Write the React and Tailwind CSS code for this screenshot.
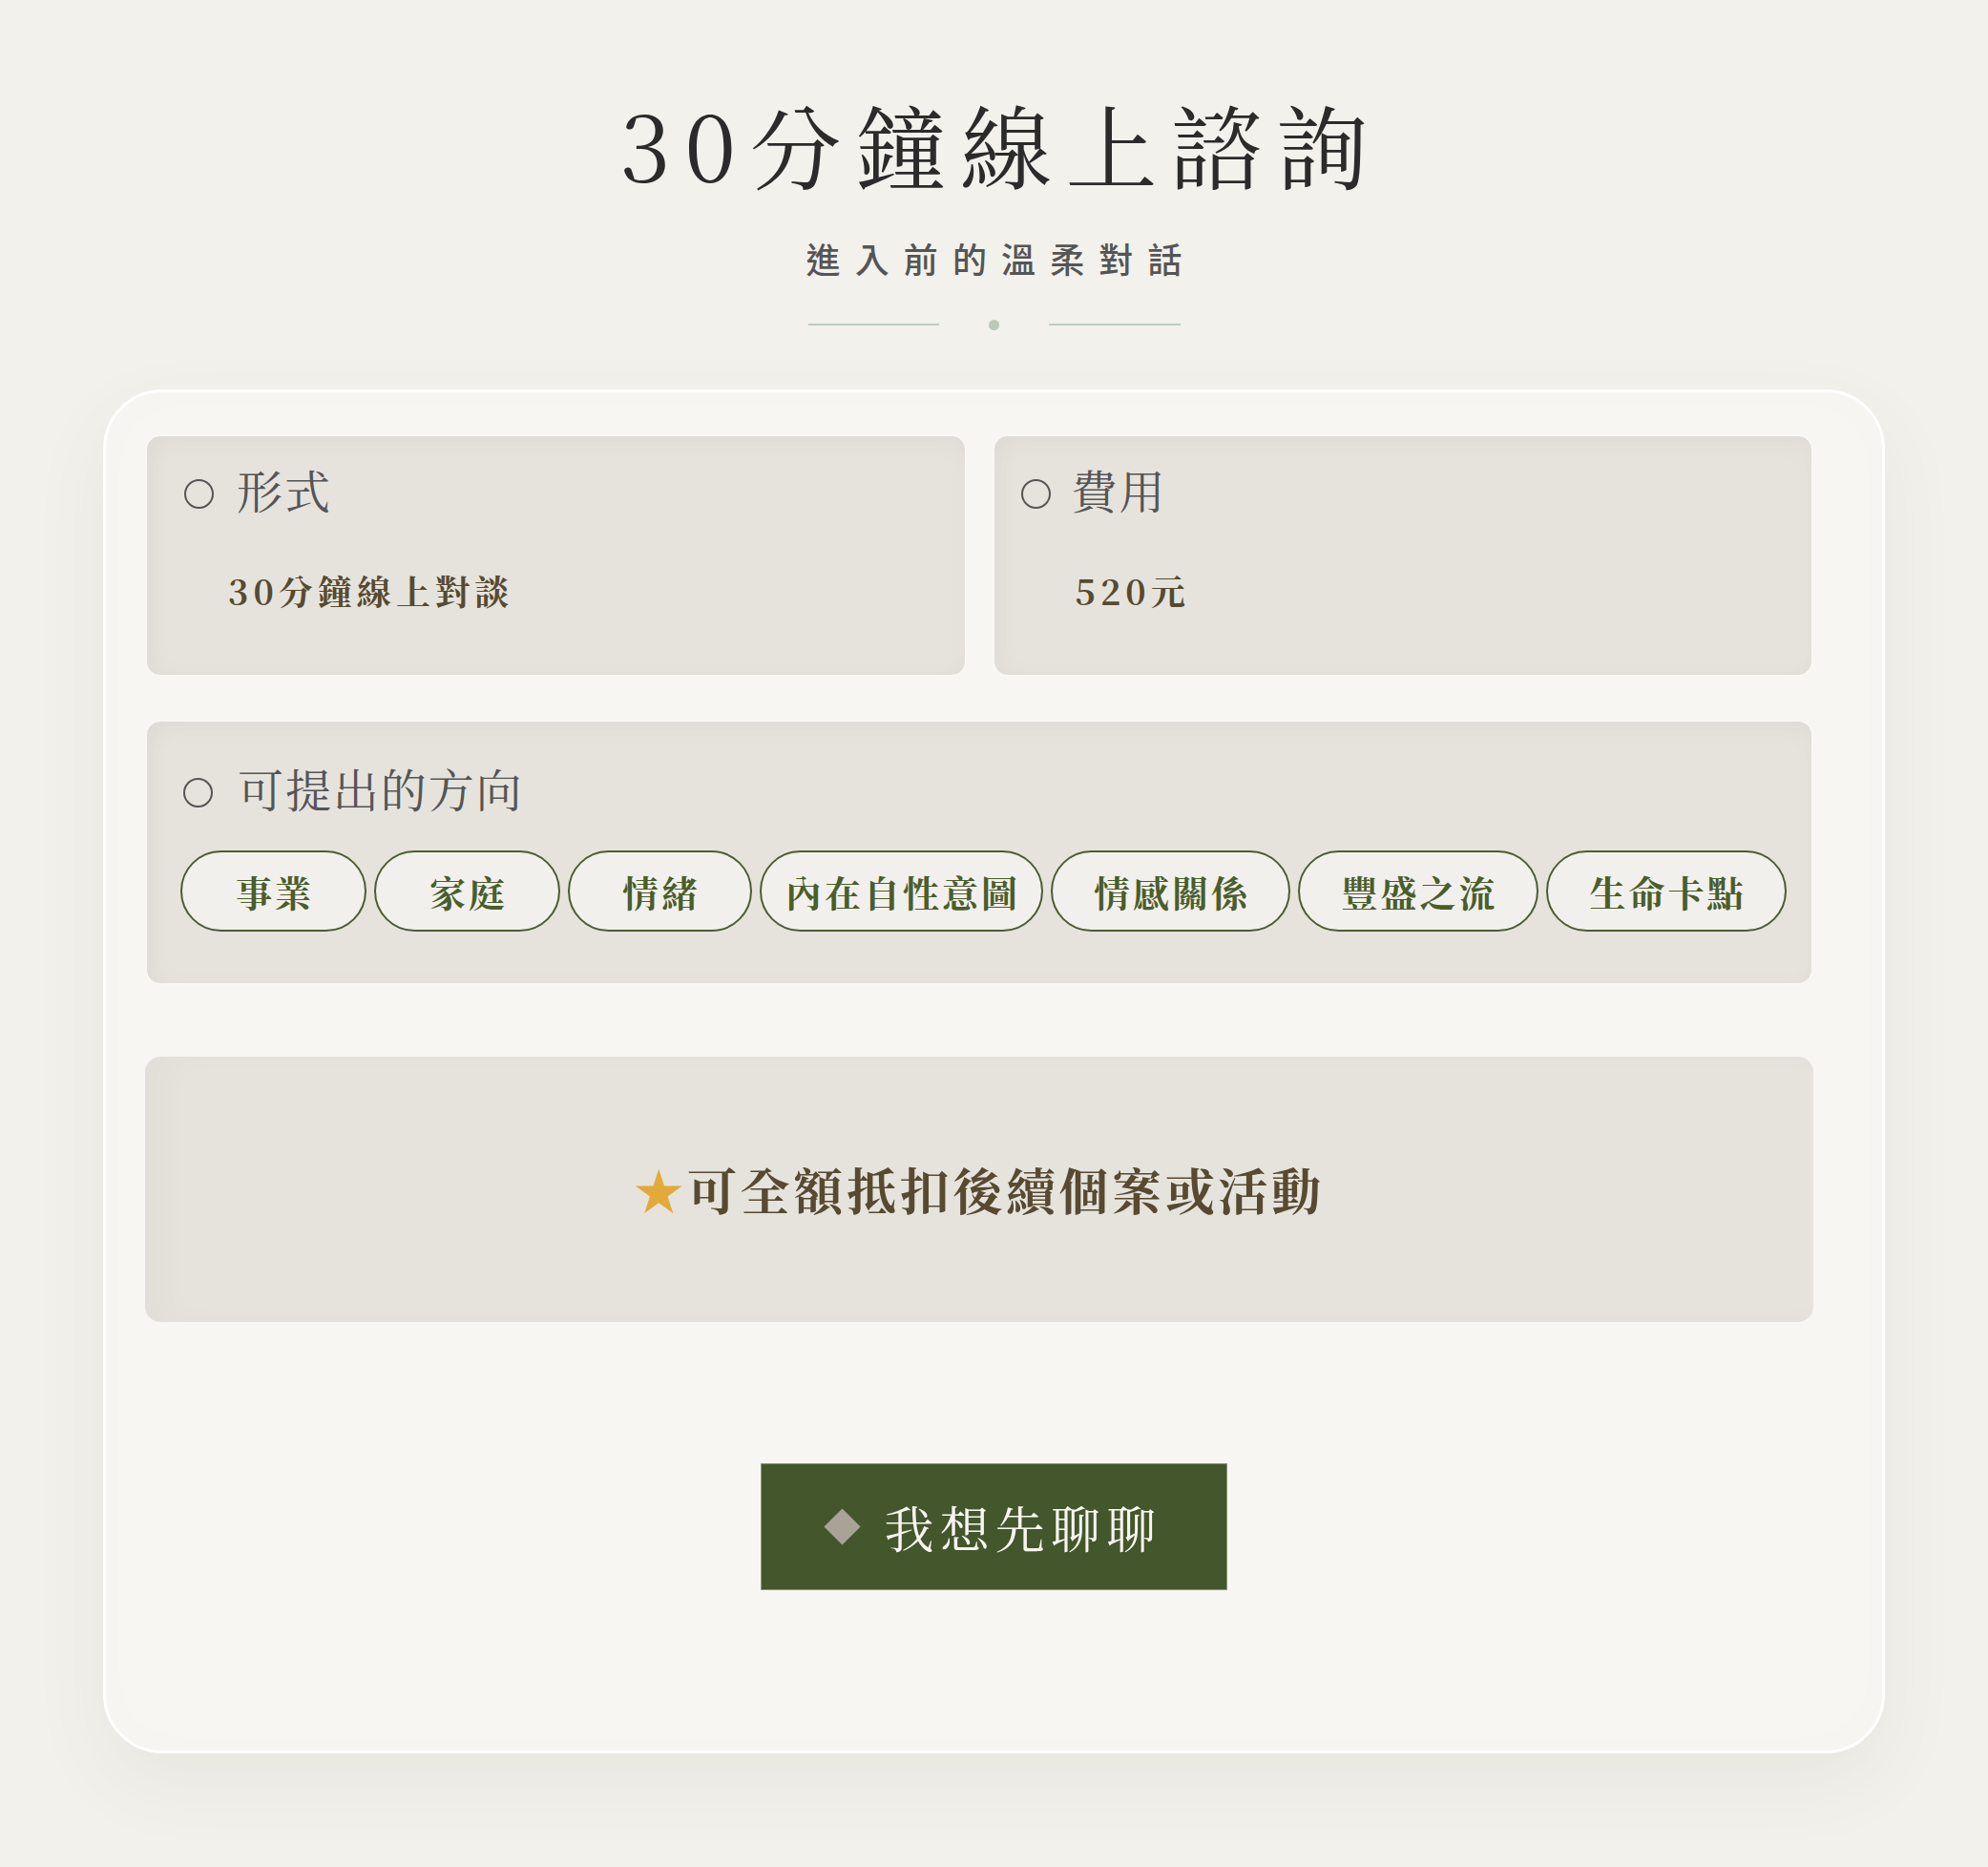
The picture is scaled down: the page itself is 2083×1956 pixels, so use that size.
const TAGS = [
  { label: "事業", w: "w-[195px]" },
  { label: "家庭", w: "w-[195px]" },
  { label: "情緒", w: "w-[193px]" },
  { label: "內在自性意圖", w: "w-[297px]" },
  { label: "情感關係", w: "w-[251px]" },
  { label: "豐盛之流", w: "w-[252px]" },
  { label: "生命卡點", w: "w-[252px]" },
];

const serif = "font-[family-name:'Noto_Serif_CJK_TC','Noto_Serif_TC','AR_PL_UMing_TW',serif]";
const sans = "font-[family-name:'Noto_Sans_CJK_TC','Noto_Sans',sans-serif]";

function Ring() {
  return <span className="inline-block w-[31px] h-[31px] rounded-full border-2 border-[#555] flex-shrink-0 mt-[8px]" />;
}

function InfoBox({ title, value, titlePad, gap }) {
  return (
    <div className="h-[254px] rounded-2xl border-2 border-[#f9f8f5] bg-[#e6e3dd] shadow-[inset_0_10px_24px_rgba(0,0,0,0.025),inset_10px_0_24px_rgba(0,0,0,0.02)]">
      <div className={`flex items-center pt-[28px] ${titlePad} ${gap}`}>
        <Ring />
        <span className={`${serif} text-[48px] leading-[56px] tracking-[0.04em] text-[#555]`}>{title}</span>
      </div>
      <p className={`${serif} pl-[85px] mt-[54px] text-[36px] leading-[48px] font-bold tracking-[0.14em] text-[#574a31]`}>{value}</p>
    </div>
  );
}

export default function App() {
  return (
    <div className="min-h-[1956px] bg-[#f2f1ec] pb-[120px]">
      {/* Header */}
      <div className="flex flex-col items-center pt-[92px]">
        <h1 className={`${serif} text-[96px] leading-[115px] font-normal tracking-[0.15em] pl-[0.15em] text-[#2b2b2b]`}>30分鐘線上諮詢</h1>
        <p className={`${sans} mt-[39px] text-[36px] leading-[48px] font-medium tracking-[0.42em] pl-[0.42em] text-[#555]`}>進入前的溫柔對話</p>
        <div className="flex items-center mt-[41px] h-[10px]">
          <div className="w-[137px] h-[2px] bg-[#c0ccbc]" />
          <div className="w-[11px] h-[11px] rounded-full bg-[#bcc8b8] mx-[52px]" />
          <div className="w-[138px] h-[2px] bg-[#c0ccbc]" />
        </div>
      </div>

      {/* Card */}
      <div className="mx-[108px] mt-[63px] rounded-[62px] border-[3px] border-white bg-[#f7f6f3] shadow-[0_30px_80px_rgba(90,80,60,0.07),inset_0_0_60px_rgba(0,0,0,0.012)] pt-[44px] pb-[168px]">
        <div className="pl-[41px] pr-[72px]">
          <div className="grid grid-cols-2 gap-[27px]">
            <InfoBox title="形式" value="30分鐘線上對談" titlePad="pl-[39px]" gap="gap-[24px]" />
            <InfoBox title="費用" value="520元" titlePad="pl-[28px]" gap="gap-[22px]" />
          </div>

          <div className="mt-[45px] h-[278px] rounded-2xl border-2 border-[#f9f8f5] bg-[#e6e3dd] shadow-[inset_0_10px_24px_rgba(0,0,0,0.025),inset_10px_0_24px_rgba(0,0,0,0.02)]">
            <div className="flex items-center gap-[26px] pt-[42px] pl-[38px]">
              <Ring />
              <span className={`${serif} text-[48px] leading-[56px] tracking-[0.04em] text-[#555]`}>可提出的方向</span>
            </div>
            <div className="flex gap-[8px] mt-[37px] pl-[35px]">
              {TAGS.map((t) => (
                <span
                  key={t.label}
                  className={`${t.w} ${serif} h-[85px] flex items-center justify-center rounded-full border-2 border-[#4b5d33] bg-[#f2f0ec] text-[38px] font-bold tracking-[0.08em] pl-[0.08em] text-[#4a5d2c]`}
                >
                  {t.label}
                </span>
              ))}
            </div>
          </div>

          <div className="mt-[75px] h-[278px] rounded-2xl bg-[#e6e3dd] shadow-[inset_24px_0_30px_rgba(0,0,0,0.02)] flex items-center justify-center">
            <p className={`${serif} text-[52px] font-bold tracking-[0.07em] text-[#574a31]`}>
              <span className="text-[#e2a93b]">★</span>可全額抵扣後續個案或活動
            </p>
          </div>
        </div>

        {/* CTA */}
        <div className="flex justify-center mt-[148px]">
          <button className="w-[489px] h-[133px] bg-[#43562c] border border-[#8a9a78] flex items-center justify-center gap-[30px] pl-[4px]">
            <span className="w-[27px] h-[27px] rotate-45 bg-[#a8a297]" />
            <span className={`${serif} text-[52px] font-normal tracking-[0.12em] text-[#f7f5ef]`}>我想先聊聊</span>
          </button>
        </div>
      </div>
    </div>
  );
}
